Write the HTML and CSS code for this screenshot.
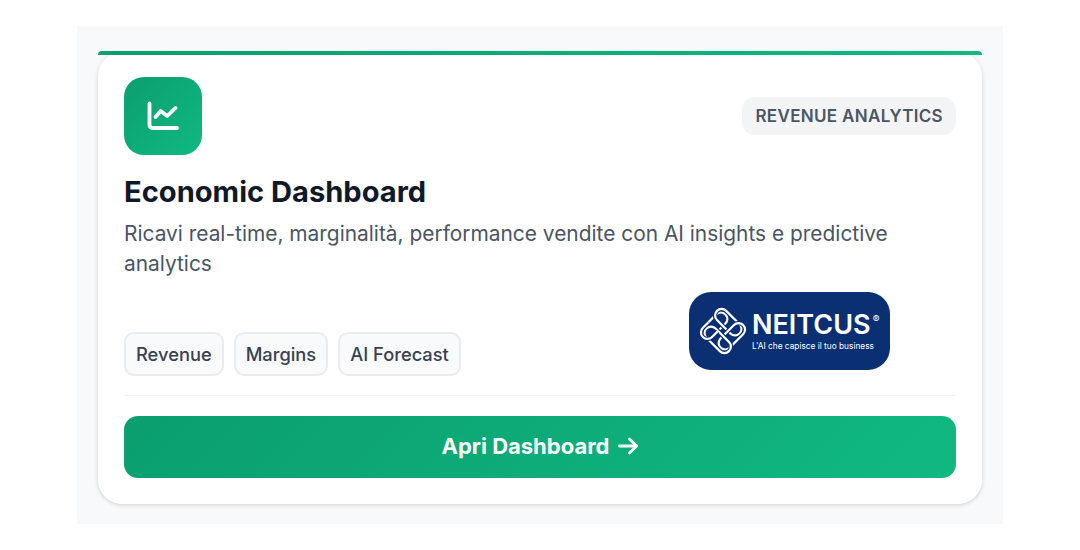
FILE: index.html
```html
<!DOCTYPE html>
<html lang="en">

<head>
  <meta charset="UTF-8">
  <meta name="viewport" content="width=device-width, initial-scale=1.0">
  <title>Economic Dashboard</title>
  <link rel="stylesheet" href="styles.css">
</head>

<body>
  <div class="stage">
    <div class="card">
      <div class="card-top">
        <div class="card-icon">
          <svg width="36" height="36" viewBox="0 0 36 36" fill="none" stroke="#fff" stroke-width="3.8" stroke-linecap="round" stroke-linejoin="round">
            <path d="M4.500 5.500V27a3 3 0 0 0 3 3H32" />
            <path d="M10.500 19 15.700 13l6.500 5L30.500 10" />
          </svg>
        </div>
        <span class="badge">REVENUE ANALYTICS</span>
      </div>

      <h2 class="card-title">Economic Dashboard</h2>
      <p class="card-desc">Ricavi real-time, marginalità, performance vendite con AI insights e predictive analytics</p>

      <div class="tags">
        <span class="tag">Revenue</span>
        <span class="tag">Margins</span>
        <span class="tag">AI Forecast</span>
      </div>

      <!-- Logo sits over the card -->
      <div class="logo">
        <svg class="logo-mark" width="50" height="50" viewBox="-25 -25 50 50" fill="none" stroke-width="2.200">
          <defs>
            <g id="band">
              <path stroke="#0b2f73" stroke-width="4.500" d="M7 -16.500A6.500 6.500 0 0 1 7 -3.500H-12A6.500 6.500 0 0 1 -12 -16.500Z" />
              <path stroke="#fff" d="M7 -16.500A6.500 6.500 0 0 1 7 -3.500H-12A6.500 6.500 0 0 1 -12 -16.500Z" />
            </g>
            <g id="band-tail">
              <path stroke="#0b2f73" stroke-width="4.500" d="M-4 -16.500H-12A6.500 6.500 0 0 0 -12 -3.500H-4" />
              <path stroke="#fff" d="M-4 -16.500H-12A6.500 6.500 0 0 0 -12 -3.500H-4" />
            </g>
          </defs>
          <use href="#band" transform="rotate(-45)" />
          <use href="#band" transform="rotate(45)" />
          <use href="#band" transform="rotate(135)" />
          <use href="#band" transform="rotate(225)" />
          <use href="#band-tail" transform="rotate(-45)" />
        </svg>
        <div class="logo-text">
          <div class="logo-name">NEITCUS<sup class="logo-reg">®</sup></div>
          <div class="logo-tagline">L'AI che capisce il tuo business</div>
        </div>
      </div>

      <div class="card-footer">
        <button class="open-btn">
          Apri Dashboard
          <svg width="22" height="22" viewBox="0 0 22 22" fill="none" stroke="#fff" stroke-width="2.800" stroke-linecap="round" stroke-linejoin="round">
            <path d="M2.500 11h17" />
            <path d="M12.500 4 19.500 11l-7 7" />
          </svg>
        </button>
      </div>
    </div>
  </div>
</body>

</html>
```

FILE: styles.css
```css
body {
  font-family: Inter, "Liberation Sans", sans-serif;
  margin: 0;
  background: white;
}

.stage {
  width: 926px;
  height: 498px;
  margin: 26px 0 0 77px;
  padding: 26px 21px 20px;
  box-sizing: border-box;
  background: #f8f9fb;
}

.card {
  position: relative;
  height: 452px;
  padding: 25px 26px 26px;
  box-sizing: border-box;
  background: white;
  border-radius: 24px;
  box-shadow: 0 1px 4px rgba(0, 0, 0, 0.16);
}

.card::before {
  content: "";
  position: absolute;
  top: -1px;
  left: 0;
  right: 0;
  height: 4px;
  background: linear-gradient(90deg, #0b9e6e, #10b981);
  border-radius: 4px 4px 0 0;
}

.card-top {
  display: flex;
  justify-content: space-between;
  align-items: center;
}

.card-icon {
  width: 78px;
  height: 78px;
  display: flex;
  align-items: center;
  justify-content: center;
  background: linear-gradient(135deg, #0b9e6e, #10b981);
  border-radius: 20px;
}

.badge {
  padding: 0 13px;
  line-height: 38px;
  font-size: 17px;
  font-weight: 600;
  letter-spacing: 0.33px;
  color: #4b5563;
  background: #f3f4f6;
  border-radius: 13px;
}

.card-title {
  margin: 19px 0 0;
  font-size: 29.100px;
  line-height: 36px;
  font-weight: 700;
  color: #111827;
}

.card-desc {
  margin: 9px 0 0;
  font-size: 20.900px;
  line-height: 30px;
  color: #4b5563;
}

.tags {
  display: flex;
  gap: 10px;
  margin-top: 53px;
}

.tag {
  padding: 0 10px;
  line-height: 40px;
  font-size: 18.300px;
  font-weight: 500;
  color: #374151;
  background: #f9fafb;
  border: 2px solid #e9ebee;
  border-radius: 10px;
}

.logo {
  position: absolute;
  left: 591px;
  top: 240px;
  width: 201px;
  height: 78px;
  display: flex;
  align-items: center;
  gap: 4px;
  padding-left: 9px;
  box-sizing: border-box;
  color: white;
  background: #0b2f73;
  border-radius: 22px;
}

.logo-name {
  font-size: 27px;
  line-height: 30px;
  font-weight: 600;
}

.logo-reg {
  font-size: 10px;
  font-weight: 400;
  line-height: 0;
  vertical-align: 11px;
  margin-left: 2px;
}

.logo-tagline {
  font-size: 8.300px;
  line-height: 12px;
}

.card-footer {
  margin-top: 19px;
  padding-top: 20px;
  border-top: 1px solid #f0f1f3;
}

.open-btn {
  width: 100%;
  height: 62px;
  display: flex;
  align-items: center;
  justify-content: center;
  gap: 8px;
  padding: 0 0 2px 1px;
  font-family: inherit;
  font-size: 22px;
  font-weight: 700;
  color: white;
  background: linear-gradient(135deg, #0b9e6e, #10b981);
  border: none;
  border-radius: 14px;
}
```
